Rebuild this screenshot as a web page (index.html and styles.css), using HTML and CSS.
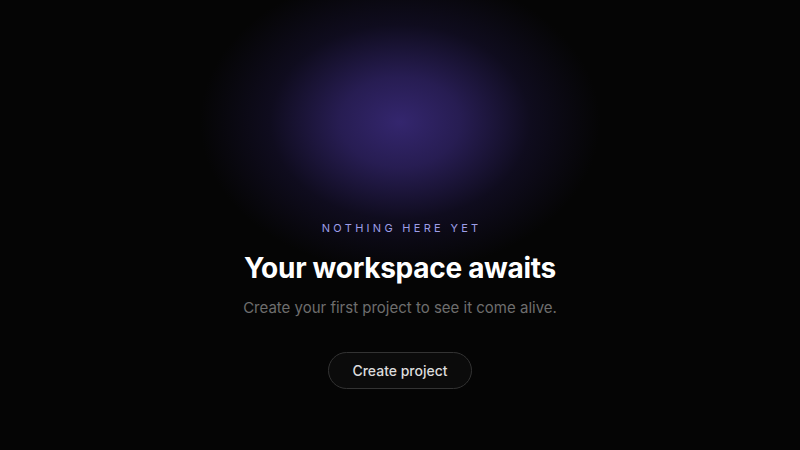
FILE: index.html
```html
<!DOCTYPE html>
<html lang="en">
<head>
<meta charset="utf-8">
<title>Empty state</title>
<link rel="stylesheet" href="styles.css">
</head>
<body>
<main class="stage">
  <section class="empty">
    <p class="eyebrow">Nothing here yet</p>
    <h1 class="title">Your workspace awaits</h1>
    <p class="subtitle">Create your first project to see it come alive.</p>
    <button class="cta" type="button">Create project</button>
  </section>
</main>
</body>
</html>
```
FILE: styles.css
```css
* { box-sizing: border-box; }
html, body { margin: 0; height: 100%; }
body {
  background: #050505;
  font-family: Inter, "Noto Sans", sans-serif;
  color: #fff;
}
.stage {
  height: 450px;
  background:
    radial-gradient(ellipse 200px 150px at 400px 122px, rgba(52,38,110,1) 0%, rgba(45,33,96,0.85) 30%, rgba(25,19,55,0.5) 65%, rgba(5,5,5,0) 100%),
    #050505;
  display: flex;
  justify-content: center;
  padding-top: 222px;
}
.empty {
  display: flex;
  flex-direction: column;
  align-items: center;
}
.eyebrow {
  margin: 0;
  font-size: 11px;
  line-height: 13px;
  letter-spacing: 0.3em;
  text-transform: uppercase;
  color: #9d9ee8;
  padding-left: 0.3em;
}
.title {
  margin: 16px 0 0;
  font-size: 28px;
  line-height: 34px;
  font-weight: 700;
  letter-spacing: -0.01em;
  color: #fff;
}
.subtitle {
  margin: 12px 0 0;
  font-size: 15px;
  line-height: 22px;
  color: #6e6e6e;
}
.cta {
  margin-top: 33px;
  height: 37px;
  padding: 0 23px;
  border-radius: 999px;
  border: 1px solid #333;
  background: #0b0b0b;
  color: #dcdcdc;
  font-family: inherit;
  font-size: 14px;
  font-weight: 500;
}
```
